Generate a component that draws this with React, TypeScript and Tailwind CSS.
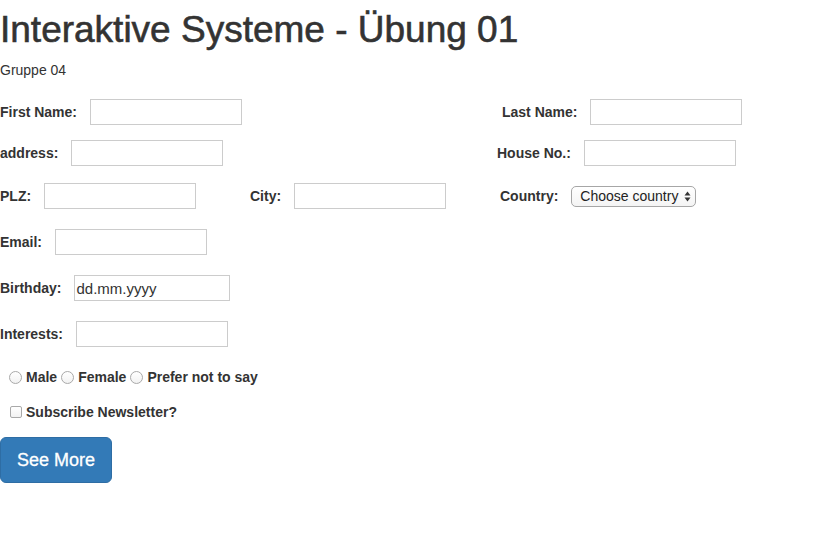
import React from 'react'

const font = { fontFamily: '"Liberation Sans", Arial, sans-serif' }

function Field({ label, w = 'w-[152px]', className = '' }: { label: string; w?: string; className?: string }) {
  return (
    <div className={`flex items-center gap-[13px] h-[26px] ${className}`}>
      <label className="text-[14px] font-bold leading-5 text-[#333]">{label}</label>
      <input type="text" className={`${w} h-[26px] border border-[#ccc] bg-white outline-none px-[3px] text-[15px] text-[#333]`} />
    </div>
  )
}

function Radio({ label }: { label: string }) {
  return (
    <label className="flex items-center gap-[4px] mr-[4px]">
      <span className="w-[13px] h-[13px] rounded-full border border-[#a9a9a9] bg-gradient-to-b from-white to-[#f2f2f2]" />
      <span className="text-[14px] font-bold leading-5 text-[#333]">{label}</span>
    </label>
  )
}

export default function App() {
  return (
    <div className="min-h-screen bg-white text-[#333]" style={font}>
      {/* ── heading ── */}
      <h1 className="mt-[10px] text-[37px] leading-[40px] font-normal text-[#333] [-webkit-text-stroke:0.6px_#333]">
        Interaktive Systeme - Übung 01
      </h1>
      <p className="mt-[10px] text-[14px] leading-5">Gruppe 04</p>

      {/* ── grid rows ── */}
      <div className="mt-[19px] grid grid-cols-[250px_247px_1fr] h-[26px]">
        <Field label="First Name:" className="col-start-1" />
        <Field label="Last Name:" className="col-start-3 ml-[5px]" />
      </div>
      <div className="mt-[15px] grid grid-cols-[250px_247px_1fr] h-[26px]">
        <Field label="address:" className="col-start-1" />
        <Field label="House No.:" className="col-start-3" />
      </div>
      <div className="mt-[17px] grid grid-cols-[250px_247px_1fr] h-[26px]">
        <Field label="PLZ:" />
        <Field label="City:" />
        <div className="flex items-center gap-[13px] h-[26px] ml-[3px]">
          <label className="text-[14px] font-bold leading-5">Country:</label>
          <div className="flex items-center justify-between w-[125px] h-[21px] rounded-[5px] border border-[#a6a6a6] bg-gradient-to-b from-white to-[#f4f4f4] pl-[8px] pr-[4px]">
            <span className="text-[14px] leading-5 text-[#222]">Choose country</span>
            <svg width="7" height="11" viewBox="0 0 7 11">
              <path d="M3.5 0.5 L6.5 4.5 L0.5 4.5 Z" fill="#333" />
              <path d="M3.5 10.5 L6.5 6.5 L0.5 6.5 Z" fill="#333" />
            </svg>
          </div>
        </div>
      </div>

      {/* ── single fields ── */}
      <Field label="Email:" className="mt-[20px]" />
      <div className="mt-[20px] flex items-center gap-[13px] h-[26px]">
        <label className="text-[14px] font-bold leading-5">Birthday:</label>
        <input
          type="text"
          placeholder="dd.mm.yyyy"
          className="w-[156px] h-[26px] border border-[#ccc] bg-white outline-none pl-[1px] text-[15px] text-[#333] placeholder:text-[#333]"
        />
      </div>
      <Field label="Interests:" className="mt-[20px]" />

      {/* ── radios ── */}
      <div className="mt-[21px] flex items-center h-[18px] pl-[9px]">
        <Radio label="Male" />
        <Radio label="Female" />
        <Radio label="Prefer not to say" />
      </div>

      {/* ── checkbox ── */}
      <label className="mt-[17px] flex items-center gap-[4px] h-[18px] pl-[10px]">
        <span className="w-[12px] h-[12px] rounded-[2px] border border-[#a9a9a9] bg-gradient-to-b from-white to-[#f2f2f2]" />
        <span className="text-[14px] font-bold leading-5">Subscribe Newsletter?</span>
      </label>

      {/* ── button ── */}
      <button className="mt-[16px] px-[16px] py-[10px] text-[18px] leading-6 text-white bg-[#337ab7] border border-[#2e6da4] rounded-[6px] [-webkit-text-stroke:0.3px_#fff]">
        See More
      </button>
    </div>
  )
}
